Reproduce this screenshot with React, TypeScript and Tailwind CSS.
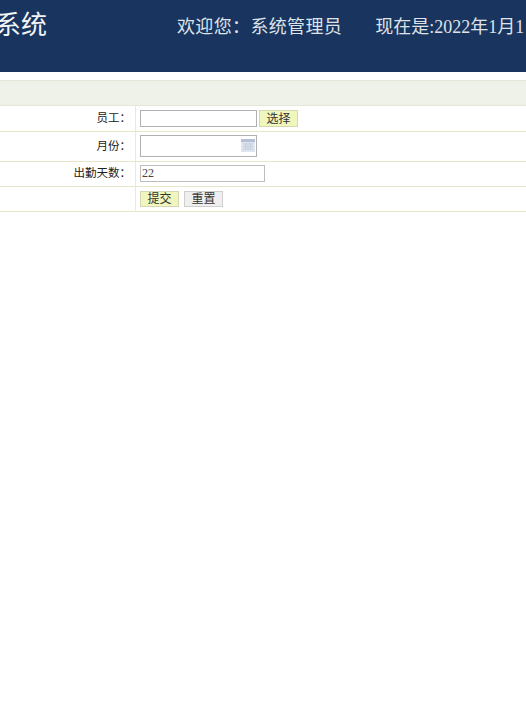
export default function App() {
  const cjk = "font-['Liberation_Sans','Noto_Sans_CJK_SC',sans-serif]"
  const serif = "font-['Liberation_Serif','Noto_Sans_CJK_SC',serif]"
  const rowLabel = `w-[136px] shrink-0 flex items-center justify-end pr-[4px] border-r border-[#e8ebdc] text-[11.5px] text-[#222] ${cjk}`

  return (
    <div className="w-[526px] h-[702px] bg-white overflow-hidden">
      {/* Header */}
      <header className={`h-[72px] bg-[#19345e] flex items-start overflow-hidden whitespace-nowrap ${serif}`}>
        <div className="w-[47px] shrink-0 flex justify-end pt-[9px]">
          <span className="text-[26px] leading-[34px] text-[#f2f4f6] shrink-0">系统</span>
        </div>
        <div className="ml-[130px] pt-[15px] text-[18px] leading-[24px] tracking-[0.35px] text-[#dfe3e8] shrink-0">
          欢迎您：系统管理员
        </div>
        <div className="ml-[33px] pt-[15px] text-[18px] leading-[24px] text-[#dfe3e8] shrink-0">
          现在是:2022年1月1
        </div>
      </header>

      {/* Title bar */}
      <div className="mt-[8px] h-[26px] bg-[#eef2e9] border-y border-[#e4e8d8]"></div>

      {/* Form rows */}
      <div className="flex h-[26px] border-b border-[#e8e6c8]">
        <div className={rowLabel}>员工：</div>
        <div className="flex items-center pl-[4px] gap-[2px]">
          <div className="w-[117px] h-[17px] bg-white border border-[#b0b0b0]"></div>
          <button className={`w-[39px] h-[17px] bg-[#f1f6bd] border border-[#d4d6b4] text-[12px] leading-none text-[#333] ${cjk}`}>选择</button>
        </div>
      </div>
      <div className="flex h-[30px] border-b border-[#e8e6c8]">
        <div className={rowLabel}>月份：</div>
        <div className="flex items-center pl-[4px] pb-[2px]">
          <div className="w-[117px] h-[22px] bg-white border border-[#b0b0b0] flex items-center justify-end pr-[1px]">
            <svg width="14" height="13" viewBox="0 0 14 13">
              <rect x="0" y="0" width="14" height="13" fill="#dfe4ee" />
              <rect x="0" y="0" width="14" height="3" fill="#b3c0d8" />
              <path d="M2 5h10M2 7.500h10M2 10h10M4.500 4v7M7 4v7M9.500 4v7" stroke="#c6cfe0" strokeWidth="1" fill="none" />
            </svg>
          </div>
        </div>
      </div>
      <div className="flex h-[25px] border-b border-[#e8e6c8]">
        <div className={rowLabel}>出勤天数：</div>
        <div className="flex items-center pl-[4px] pb-[2px]">
          <div className={`w-[125px] h-[17px] bg-white border border-[#bdbdbd] pl-[1px] text-[12px] leading-[15px] text-[#444] ${serif}`}>22</div>
        </div>
      </div>
      <div className="flex h-[25px] border-b border-[#e8e6c8]">
        <div className={rowLabel}></div>
        <div className="flex items-center pl-[4px] gap-[5px]">
          <button className={`w-[39px] h-[16px] bg-[#f1f6bd] border border-[#d4d6b4] text-[12px] leading-none text-[#333] ${cjk}`}>提交</button>
          <button className={`w-[39px] h-[16px] bg-[#efefef] border border-[#cfcfcf] text-[12px] leading-none text-[#333] ${cjk}`}>重置</button>
        </div>
      </div>
    </div>
  )
}
